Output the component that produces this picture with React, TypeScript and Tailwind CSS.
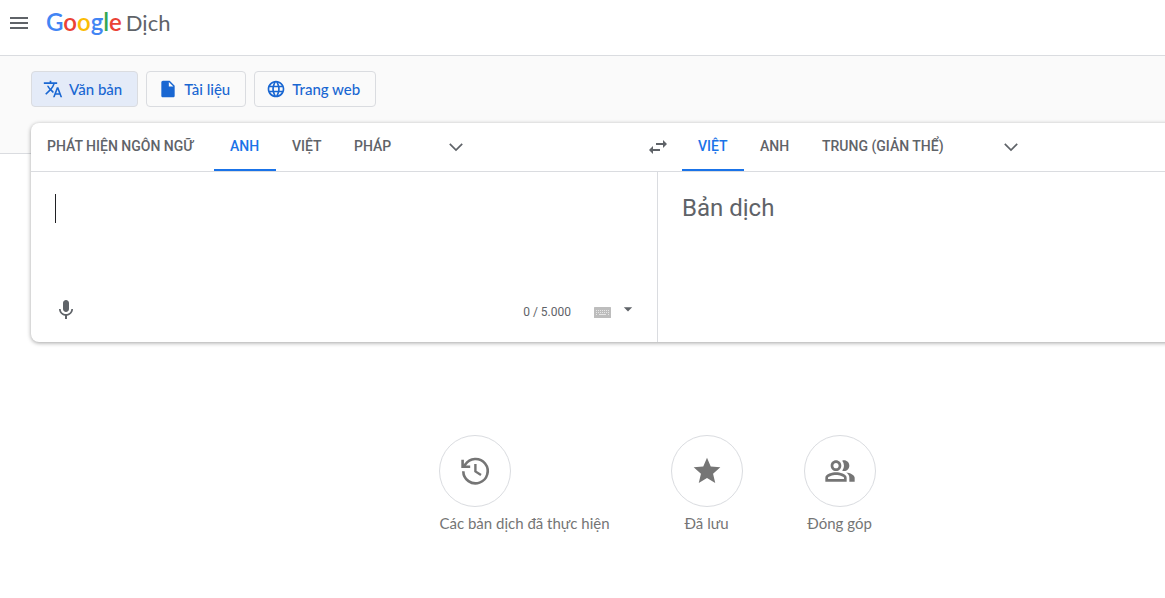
import type { ReactNode } from "react";
import {
  MdArrowDropDown,
  MdInsertDriveFile,
  MdLanguage,
  MdMenu,
  MdMic,
  MdOutlinePeopleAlt,
  MdStar,
  MdSwapHoriz,
  MdTranslate,
} from "react-icons/md";

function ChevronIcon() {
  return (
    <svg width="24" height="24" viewBox="0 0 24 24" fill="none" stroke="currentColor" strokeWidth="1.7" aria-hidden="true">
      <path d="M5.8 8.8 12 15l6.2-6.2" />
    </svg>
  );
}

function KeyboardIcon() {
  return (
    <svg width="18" height="11" viewBox="0 0 18 11" aria-hidden="true">
      <rect width="17" height="11" rx="0.5" fill="#bdbdbd" />
      <path d="M2 3.5h13M2 5.5h13" stroke="#e6e6e6" strokeDasharray="1 1" />
      <path d="M2 7.5h1M5 7.5h7M14 7.5h1" stroke="#e6e6e6" />
    </svg>
  );
}

function HistoryIcon() {
  return (
    <svg width="32" height="32" viewBox="0 0 32 32" fill="none" stroke="currentColor" strokeWidth="2.6" aria-hidden="true">
      <path d="M4.3 16.2A12.2 12.2 0 1 0 6.2 9.6L4.6 11.4" />
      <path d="M3.6 4.8v7h7.6" />
      <path d="M16.4 9v7.4l5.6 3.6" strokeWidth="2.4" />
    </svg>
  );
}

function ModeButton({ icon, label, active }: { icon: ReactNode; label: string; active?: boolean }) {
  return (
    <button
      type="button"
      className={`flex h-9 items-center gap-1.5 rounded border border-[#dadce0] pr-[15px] pl-[11px] text-[15px] font-medium text-[#1967d2] ${active ? "bg-[#e4ebf8]" : ""}`}
    >
      <span className="text-xl">{icon}</span>
      {label}
    </button>
  );
}

function LanguageTab({ label, active, minWidth = "min-w-[62px]" }: { label: string; active?: boolean; minWidth?: string }) {
  return (
    <button
      type="button"
      role="tab"
      aria-selected={!!active}
      className={`h-12 shrink-0 border-b-2 px-4 text-left text-sm font-medium whitespace-nowrap ${minWidth} ${active ? "border-[#1a73e8] text-[#1a73e8]" : "border-transparent text-[#5f6368]"}`}
    >
      {label}
    </button>
  );
}

function MoreLanguages({ label }: { label: string }) {
  return (
    <button type="button" aria-label={label} className="ml-6 flex size-12 items-center justify-center text-[#5f6368]">
      <ChevronIcon />
    </button>
  );
}

function Shortcut({ icon, label }: { icon: ReactNode; label: string }) {
  return (
    <a href="#" className="flex min-w-[72px] flex-col gap-1.5 text-[15px] leading-5 text-[#757575]">
      <span className="flex size-[72px] items-center justify-center rounded-full border border-[#dadce0] text-[32px]">
        {icon}
      </span>
      <span className="min-w-[72px] self-start text-center">{label}</span>
    </a>
  );
}

export default function App() {
  return (
    <div className="min-h-screen overflow-x-hidden bg-white font-['Lato',sans-serif]">
      <header className="flex h-14 items-start gap-[15px] border-b border-[#dadce0] px-[7px] pt-[11px]">
        <button type="button" aria-label="Menu chính" className="text-2xl text-[#5f6368]">
          <MdMenu />
        </button>
        <a href="#" className="flex items-baseline gap-1 text-2xl leading-[22px] text-[#5f6368]">
          <span className="font-semibold">
            <span className="text-[#4285f4]">G</span>
            <span className="text-[#ea4335]">o</span>
            <span className="text-[#fbbc05]">o</span>
            <span className="text-[#4285f4]">g</span>
            <span className="text-[#34a853]">l</span>
            <span className="text-[#ea4335]">e</span>
          </span>
          <span className="text-[22px]">Dịch</span>
        </a>
      </header>

      <nav className="flex gap-2 border-b border-[#dadce0] bg-[#fafafa] px-[31px] pt-[15px] pb-[46px]">
        <ModeButton icon={<MdTranslate />} label="Văn bản" active />
        <ModeButton icon={<MdInsertDriveFile />} label="Tài liệu" />
        <ModeButton icon={<MdLanguage />} label="Trang web" />
      </nav>

      <main>
        <section className="relative -mt-[31px] -mr-3 ml-[31px] rounded-lg bg-white font-['Roboto',sans-serif] shadow-[0_1px_4px_rgba(0,0,0,0.37)]">
          <div className="grid grid-cols-[627fr_519fr] border-b border-[#dadce0]">
            <div className="flex">
              <div role="tablist" aria-label="Ngôn ngữ nguồn" className="flex">
                <LanguageTab label="PHÁT HIỆN NGÔN NGỮ" minWidth="min-w-[183px]" />
                <LanguageTab label="ANH" active />
                <LanguageTab label="VIỆT" />
                <LanguageTab label="PHÁP" minWidth="min-w-[70px]" />
              </div>
              <MoreLanguages label="Thêm ngôn ngữ nguồn" />
              <button type="button" aria-label="Hoán đổi ngôn ngữ" className="-mr-6 ml-auto flex size-12 items-center justify-center text-2xl text-[#5f6368]">
                <MdSwapHoriz />
              </button>
            </div>
            <div className="flex pl-6">
              <div role="tablist" aria-label="Ngôn ngữ đích" className="flex">
                <LanguageTab label="VIỆT" active />
                <LanguageTab label="ANH" />
                <LanguageTab label="TRUNG (GIẢN THỂ)" minWidth="min-w-[157px]" />
              </div>
              <MoreLanguages label="Thêm ngôn ngữ đích" />
            </div>
          </div>

          <div className="grid grid-cols-[627fr_519fr]">
            <div className="flex flex-col border-r border-[#dadce0]">
              <div className="relative">
                <textarea
                  aria-label="Văn bản nguồn"
                  className="block h-[114px] w-full resize-none px-6 py-5 text-2xl text-[#3c4043] caret-transparent outline-none"
                />
                <span aria-hidden="true" className="absolute top-[22px] left-6 h-[29px] w-px bg-[#202124]" />
              </div>
              <div className="flex h-14 items-center pr-[19px] pb-1 pl-[23px]">
                <button type="button" aria-label="Dịch bằng giọng nói" className="pb-1 text-2xl text-[#5f6368]">
                  <MdMic />
                </button>
                <span className="ml-auto text-xs text-[#5f6368]">0 / 5.000</span>
                <button type="button" aria-label="Bàn phím ảo" className="ml-[23px]">
                  <KeyboardIcon />
                </button>
                <button type="button" aria-label="Chọn công cụ nhập" className="ml-1.5 pb-1.5 text-xl text-[#5f6368]">
                  <MdArrowDropDown />
                </button>
              </div>
            </div>
            <div className="px-6 py-5 text-2xl text-[#5f6368]">Bản dịch</div>
          </div>
        </section>

        <nav className="flex justify-center gap-[61px] pt-[93px] pl-[150px]">
          <Shortcut icon={<HistoryIcon />} label="Các bản dịch đã thực hiện" />
          <Shortcut icon={<MdStar />} label="Đã lưu" />
          <Shortcut icon={<MdOutlinePeopleAlt />} label="Đóng góp" />
        </nav>
      </main>
    </div>
  );
}
